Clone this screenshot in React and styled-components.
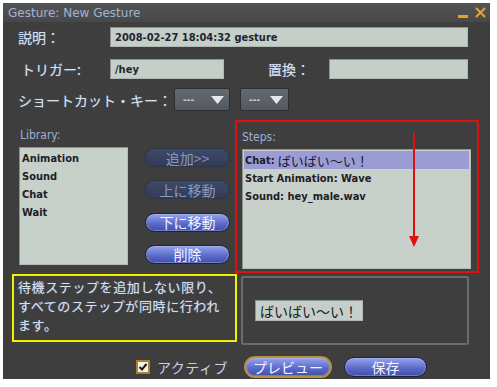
import styled, { createGlobalStyle } from "styled-components";

const Global = createGlobalStyle`
  html, body { margin: 0; padding: 0; background: #fff; }
  body { font-family: "DejaVu Sans", "Noto Sans CJK JP", sans-serif; }
`;

const jp = `"Noto Sans CJK JP", "DejaVu Sans", sans-serif`;
const latin = `"DejaVu Sans Condensed", "DejaVu Sans", "Noto Sans CJK JP", sans-serif`;

const Window = styled.div`
  margin: 3px 0 0 3px;
  width: 487px;
  height: 376px;
  background: #3e3e3e;
  display: flex;
  flex-direction: column;
`;

const TitleBar = styled.div`
  height: 19px;
  background: linear-gradient(#545454, #484848);
  display: flex;
  align-items: center;
  justify-content: space-between;
  padding: 0 4px 0 5px;
  color: #9fb4d2;
  font: 12px "DejaVu Sans", sans-serif;
`;

const TitleControls = styled.div`
  display: flex;
  align-items: center;
  gap: 7px;
`;

const Minimize = styled.span`
  width: 10px;
  height: 3px;
  margin-top: 8px;
  background: #e8a21e;
`;

const Row = styled.div`
  display: flex;
  align-items: center;
  height: ${(p) => p.$h || 20}px;
  margin-top: ${(p) => p.$mt || 0}px;
  padding-left: 15px;
`;

const Label = styled.span`
  width: ${(p) => p.$w}px;
  margin-left: ${(p) => p.$ml || 0}px;
  padding-left: ${(p) => p.$pl || 0}px;
  box-sizing: border-box;
  font: 14px ${jp};
  color: #d4e0f2;
  white-space: nowrap;
  text-shadow: 0 0 1px #8090b0;
`;

const Field = styled.div`
  width: ${(p) => p.$w}px;
  height: ${(p) => p.$h || 20}px;
  box-sizing: border-box;
  background: #c6cec9;
  border: 1px solid #8c9490;
  border-right-color: #b0b8b4;
  border-bottom-color: #b0b8b4;
  padding-left: 4px;
  display: flex;
  align-items: center;
  font: bold 11px ${latin};
  color: #1e2630;
`;

const Dropdown = styled.div`
  width: ${(p) => p.$w}px;
  height: 23px;
  margin-left: ${(p) => p.$ml || 0}px;
  box-sizing: border-box;
  background: linear-gradient(#656a72, #545860);
  border: 1px solid #2c2e32;
  border-radius: 2px;
  display: flex;
  align-items: center;
  justify-content: space-between;
  padding: 0 5px 0 8px;
  color: #c4c8d0;
  font: bold 10px ${latin};
`;

const Main = styled.div`
  display: flex;
  margin-top: 9px;
`;

const LeftCol = styled.div`
  width: 232px;
  padding-left: 16px;
  box-sizing: border-box;
  display: flex;
  flex-direction: column;
`;

const PanelLabel = styled.div`
  height: 16px;
  margin-top: 8px;
  padding-left: ${(p) => p.$pl || 0}px;
  font: 12px ${latin};
  color: #9cb0d6;
`;

const LibRow = styled.div`
  display: flex;
  margin-top: 3px;
`;

const List = styled.div`
  width: ${(p) => p.$w}px;
  height: ${(p) => p.$h}px;
  margin-top: ${(p) => p.$mt || 0}px;
  box-sizing: border-box;
  background: #c8d0ca;
  border: 1px solid #8a928e;
  border-right-color: #b4bcb8;
  border-bottom-color: #b4bcb8;
  padding: 1px;
`;

const ListItem = styled.div`
  height: 18px;
  display: flex;
  align-items: center;
  padding-left: 1px;
  font: bold 11px ${latin};
  color: #1c2028;
  background: ${(p) => (p.$selected ? "#9c9cd4" : "transparent")};
  white-space: nowrap;
  overflow: hidden;
`;

const Jp = styled.span`
  margin-left: 3px;
  font: 13px/1 ${jp};
`;

const ButtonCol = styled.div`
  width: 85px;
  height: 116px;
  margin: 1px 0 0 17px;
  display: flex;
  flex-direction: column;
  justify-content: space-between;
`;

const PillButton = styled.div`
  width: ${(p) => p.$w || 85}px;
  height: ${(p) => p.$h || 19}px;
  margin-left: ${(p) => p.$ml || 0}px;
  box-sizing: border-box;
  border-radius: 11px;
  display: flex;
  align-items: center;
  justify-content: center;
  font: 14px ${jp};
  color: ${(p) => (p.$dim ? "#8898bc" : "#f2f4ff")};
  background: ${(p) =>
    p.$dim
      ? "linear-gradient(#3e4a68, #323c58)"
      : "linear-gradient(#95a4ec, #5c6ccc 55%, #3f4ea8)"};
  border: ${(p) =>
    p.$gold ? "2px solid #b8923a" : p.$dim ? "1px solid #303648" : "1px solid #1e2240"};
  box-shadow: ${(p) => (p.$dim ? "none" : "inset 0 0 0 1px rgba(200,210,255,0.35)")};
`;

const StepsBox = styled.div`
  position: relative;
  width: 244px;
  height: 153px;
  box-sizing: border-box;
  border: 2px solid #e01010;
  padding-left: 5px;
  display: flex;
  flex-direction: column;
`;

const ArrowOverlay = styled.svg`
  position: absolute;
  left: 171px;
  top: 11px;
`;

const Bottom = styled.div`
  display: flex;
  align-items: flex-start;
  margin-top: 1px;
  padding-left: 9px;
`;

const Note = styled.div`
  width: 225px;
  height: 68px;
  box-sizing: border-box;
  border: 2px solid #f0f000;
  padding: 1px 0 0 4px;
  font: 13px/19px ${jp};
  letter-spacing: 0.6px;
  color: #d4e0f2;
  text-shadow: 0 0 1px #8090b0;
`;

const NoteLine = styled.div`
  height: 19px;
  white-space: nowrap;
`;

const DetailPanel = styled.div`
  width: 228px;
  height: 69px;
  margin: 2px 0 0 4px;
  box-sizing: border-box;
  border: 2px solid #656c74;
  border-radius: 2px;
  padding: 22px 0 0 12px;
`;

const ChatField = styled(Field)`
  font: 14px ${jp};
  color: #202020;
`;

const Footer = styled.div`
  display: flex;
  align-items: center;
  height: 22px;
  margin-top: 11px;
  padding-left: 133px;
`;

const CheckBox = styled.span`
  width: 14px;
  height: 14px;
  box-sizing: border-box;
  background: #f4f2e4;
  border: 2px solid #a8822c;
  display: flex;
  align-items: center;
  justify-content: center;
`;

const CheckLabel = styled.span`
  margin-left: 7px;
  font: 14px ${jp};
  color: #c8d2e4;
  letter-spacing: 0.5px;
`;

const Caret = () => (
  <svg width="13" height="8" viewBox="0 0 13 8">
    <path d="M0 0 H13 L6.5 8 Z" fill="#e6e8f0" />
  </svg>
);

export default function App() {
  return (
    <>
      <Global />
      <Window>
        <TitleBar>
          <span>Gesture: New Gesture</span>
          <TitleControls>
            <Minimize />
            <svg width="11" height="11" viewBox="0 0 11 11">
              <path d="M1 1 L10 10 M10 1 L1 10" stroke="#e8a21e" strokeWidth="2.2" />
            </svg>
          </TitleControls>
        </TitleBar>

        <Row $mt={5}>
          <Label $w={92}>説明：</Label>
          <Field $w={358}>2008-02-27 18:04:32 gesture</Field>
        </Row>
        <Row $mt={12}>
          <Label $w={92} $pl={3}>トリガー:</Label>
          <Field $w={114}>/hey</Field>
          <Label $w={61} $ml={44}>置換：</Label>
          <Field $w={139} />
        </Row>
        <Row $mt={9} $h={23}>
          <Label $w={156}>ショートカット・キー：</Label>
          <Dropdown $w={56}>
            <span>---</span>
            <Caret />
          </Dropdown>
          <Dropdown $w={49} $ml={10}>
            <span>---</span>
            <Caret />
          </Dropdown>
        </Row>

        <Main>
          <LeftCol>
            <PanelLabel $pl={1}>Library:</PanelLabel>
            <LibRow>
              <List $w={109} $h={118}>
                {["Animation", "Sound", "Chat", "Wait"].map((t) => (
                  <ListItem key={t}>{t}</ListItem>
                ))}
              </List>
              <ButtonCol>
                <PillButton $dim>追加&gt;&gt;</PillButton>
                <PillButton $dim>上に移動</PillButton>
                <PillButton>下に移動</PillButton>
                <PillButton>削除</PillButton>
              </ButtonCol>
            </LibRow>
          </LeftCol>

          <StepsBox>
            <PanelLabel>Steps:</PanelLabel>
            <List $w={229} $h={120} $mt={3}>
              <ListItem $selected>
                Chat:<Jp>ばいばい〜い！</Jp>
              </ListItem>
              <ListItem>Start Animation: Wave</ListItem>
              <ListItem>Sound: hey_male.wav</ListItem>
            </List>
            <ArrowOverlay width="12" height="116" viewBox="0 0 12 116">
              <path d="M6 0 V106" stroke="#e01010" strokeWidth="2" />
              <path d="M1 103 L6 114 L11 103 Z" fill="#e01010" />
            </ArrowOverlay>
          </StepsBox>
        </Main>

        <Bottom>
          <Note>
            <NoteLine>待機ステップを追加しない限り、</NoteLine>
            <NoteLine>すべてのステップが同時に行われ</NoteLine>
            <NoteLine>ます。</NoteLine>
          </Note>
          <DetailPanel>
            <ChatField $w={108} $h={21}>ばいばい〜い！</ChatField>
          </DetailPanel>
        </Bottom>

        <Footer>
          <CheckBox>
            <svg width="10" height="10" viewBox="0 0 10 10">
              <path d="M1.5 5 L4 7.5 L8.5 2" stroke="#1a1a1a" strokeWidth="2" fill="none" />
            </svg>
          </CheckBox>
          <CheckLabel>アクティブ</CheckLabel>
          <PillButton $gold $w={88} $h={22} $ml={16}>プレビュー</PillButton>
          <PillButton $w={83} $h={20} $ml={12}>保存</PillButton>
        </Footer>
      </Window>
    </>
  );
}
